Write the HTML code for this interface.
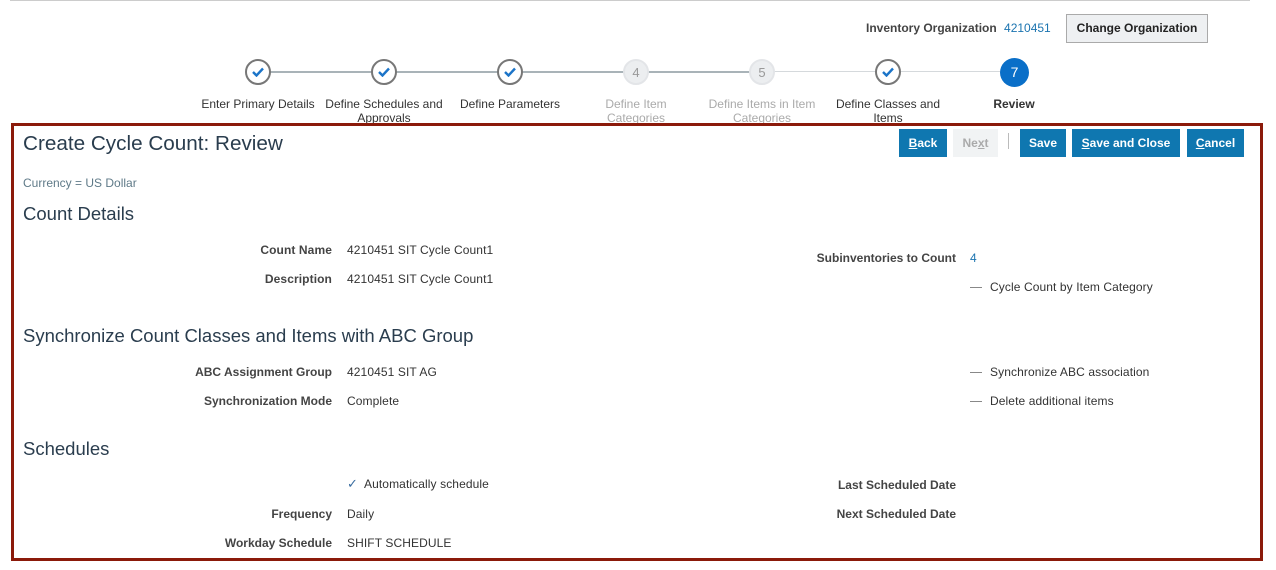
<!DOCTYPE html>
<html><head><style>
body{margin:0;width:1276px;height:570px;position:relative;background:#fff;font-family:"Liberation Sans",Arial,sans-serif;overflow:hidden;color:#333}
.a{position:absolute;white-space:nowrap}
.lbl{font-size:12px;font-weight:bold;color:#444;text-align:right}
.val{font-size:12px;color:#333;letter-spacing:0.1px}
.h{font-size:18.5px;color:#2a3d4e}
.c{position:absolute;width:26px;height:26px;border-radius:50%;box-sizing:border-box;text-align:center;line-height:24px;font-size:13px}
.ck{border:2px solid #777;background:#fff}
.ck svg{position:absolute;left:5px;top:6px}
.dis{background:#eceef0;border:2px solid #e3e5e8;color:#999}
.st{font-size:12px;text-align:center;width:126px;line-height:14px;color:#333}
.btn{position:absolute;top:129px;height:28px;background:#0f77b0;color:#fff;font-size:12px;font-weight:bold;line-height:28px;text-align:center}
.dash{display:inline-block;width:12px;border-top:1px solid #888;vertical-align:middle;margin-right:8px}
</style></head><body>
<div class="a" style="left:10px;top:0;width:1240px;height:1px;background:#ccc"></div>
<div class="a" style="left:866px;top:21px;font-size:12px;font-weight:bold;color:#444">Inventory Organization <span style="font-weight:normal;color:#1b74b0;margin-left:4px">4210451</span></div>
<div class="a" style="left:1066px;top:14px;width:140px;height:27px;border:1px solid #aaa;background:#eef0f2;font-size:12px;font-weight:bold;line-height:26px;text-align:center;color:#222">Change Organization</div>
<div class="a" style="left:258px;top:71px;width:504px;height:2px;background:#a9b3b8"></div>
<div class="a" style="left:762px;top:71px;width:252px;height:1px;background:#d5d9dc"></div>
<div class="c ck" style="left:245px;top:59px"><svg width="12" height="10"><path d="M1 5 L4.5 8.5 L11 1.5" stroke="#1b74c8" stroke-width="2.4" fill="none"/></svg></div>
<div class="c ck" style="left:371px;top:59px"><svg width="12" height="10"><path d="M1 5 L4.5 8.5 L11 1.5" stroke="#1b74c8" stroke-width="2.4" fill="none"/></svg></div>
<div class="c ck" style="left:497px;top:59px"><svg width="12" height="10"><path d="M1 5 L4.5 8.5 L11 1.5" stroke="#1b74c8" stroke-width="2.4" fill="none"/></svg></div>
<div class="c dis" style="left:623px;top:59px">4</div>
<div class="c dis" style="left:749px;top:59px">5</div>
<div class="c ck" style="left:875px;top:59px"><svg width="12" height="10"><path d="M1 5 L4.5 8.5 L11 1.5" stroke="#1b74c8" stroke-width="2.4" fill="none"/></svg></div>
<div class="c" style="left:1000px;top:58px;width:29px;height:29px;line-height:29px;background:#0a6fc8;color:#fff;font-size:14px">7</div>
<div class="a st" style="left:195px;top:97px">Enter Primary Details</div>
<div class="a st" style="left:321px;top:97px">Define Schedules and<br>Approvals</div>
<div class="a st" style="left:447px;top:97px">Define Parameters</div>
<div class="a st" style="left:573px;top:97px;color:#aaa">Define Item<br>Categories</div>
<div class="a st" style="left:699px;top:97px;color:#aaa">Define Items in Item<br>Categories</div>
<div class="a st" style="left:825px;top:97px">Define Classes and<br>Items</div>
<div class="a st" style="left:951px;top:97px;font-weight:bold">Review</div>
<div class="a" style="left:11px;top:123px;width:1246px;height:432px;border:3px solid #8b1a0a;background:#fff"></div>
<div class="a" style="left:23px;top:132px;font-size:20.7px;color:#2a3d4e">Create Cycle Count: Review</div>
<div class="btn" style="left:899px;width:48px"><u>B</u>ack</div>
<div class="btn" style="left:953px;width:45px;background:#f1f3f4;color:#aaa">Ne<u>x</u>t</div>
<div class="a" style="left:1008px;top:133px;width:1px;height:16px;background:#bbb"></div>
<div class="btn" style="left:1020px;width:46px">Save</div>
<div class="btn" style="left:1072px;width:108px"><u>S</u>ave and Close</div>
<div class="btn" style="left:1187px;width:57px"><u>C</u>ancel</div>
<div class="a" style="left:23px;top:176px;font-size:12px;color:#5f7a88">Currency = US Dollar</div>
<div class="a h" style="left:23px;top:203px">Count Details</div>
<div class="a lbl" style="right:944px;top:243px;letter-spacing:0.1px">Count Name</div>
<div class="a val" style="left:347px;top:243px">4210451 SIT Cycle Count1</div>
<div class="a lbl" style="right:944px;top:272px;letter-spacing:0.1px">Description</div>
<div class="a val" style="left:347px;top:272px">4210451 SIT Cycle Count1</div>
<div class="a lbl" style="right:320px;top:251px">Subinventories to Count</div>
<div class="a val" style="left:970px;top:251px;color:#1b74b0">4</div>
<div class="a val" style="left:970px;top:280px"><span class="dash"></span>Cycle Count by Item Category</div>
<div class="a h" style="left:23px;top:325px">Synchronize Count Classes and Items with ABC Group</div>
<div class="a lbl" style="right:944px;top:365px">ABC Assignment Group</div>
<div class="a val" style="left:347px;top:365px">4210451 SIT AG</div>
<div class="a lbl" style="right:944px;top:394px">Synchronization Mode</div>
<div class="a val" style="left:347px;top:394px">Complete</div>
<div class="a val" style="left:970px;top:365px"><span class="dash"></span>Synchronize ABC association</div>
<div class="a val" style="left:970px;top:394px"><span class="dash"></span>Delete additional items</div>
<div class="a h" style="left:23px;top:438px">Schedules</div>
<div class="a val" style="left:347px;top:476px"><span style="color:#3a6da0;font-size:13px;margin-right:6px">✓</span>Automatically schedule</div>
<div class="a lbl" style="right:944px;top:507px">Frequency</div>
<div class="a val" style="left:347px;top:507px">Daily</div>
<div class="a lbl" style="right:944px;top:536px">Workday Schedule</div>
<div class="a val" style="left:347px;top:536px">SHIFT SCHEDULE</div>
<div class="a lbl" style="right:320px;top:478px">Last Scheduled Date</div>
<div class="a lbl" style="right:320px;top:507px">Next Scheduled Date</div>
</body></html>
